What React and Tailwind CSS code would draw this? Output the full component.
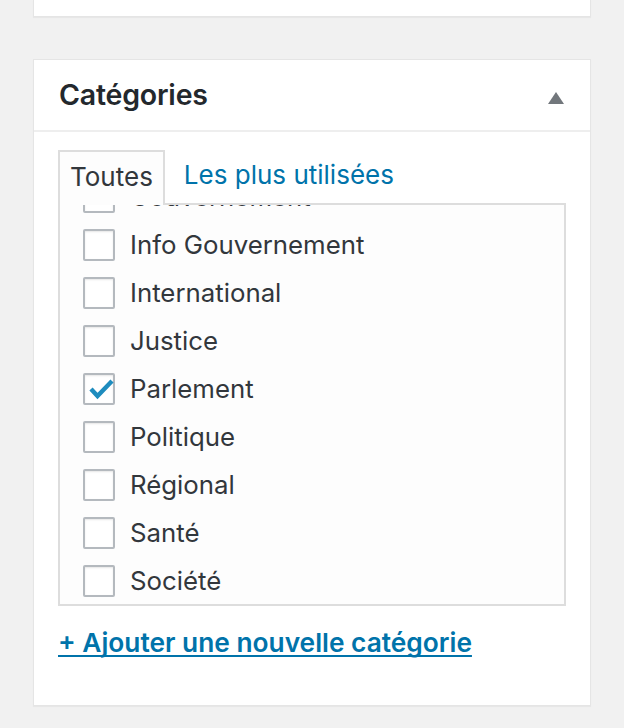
import React from "react";

const items = [
  { label: "Gouvernement", checked: false },
  { label: "Info Gouvernement", checked: false },
  { label: "International", checked: false },
  { label: "Justice", checked: false },
  { label: "Parlement", checked: true },
  { label: "Politique", checked: false },
  { label: "Régional", checked: false },
  { label: "Santé", checked: false },
  { label: "Société", checked: false },
];

function Box({ checked }) {
  return (
    <span className="relative flex h-[32px] w-[32px] shrink-0 items-center justify-center rounded-[2px] border-2 border-[#b4b9be] bg-white shadow-[inset_0_1px_2px_rgba(0,0,0,0.1)]">
      {checked && (
        <svg width="26" height="22" viewBox="0 0 26 22" className="absolute left-[4px] top-[3px]">
          <polyline points="2,11 8.5,18 23,3" fill="none" stroke="#1e8cbe" strokeWidth="4.4" strokeLinecap="butt" strokeLinejoin="miter" />
        </svg>
      )}
    </span>
  );
}

export default function App() {
  return (
    <div
      className="w-[624px] min-h-[728px] bg-[#f1f1f1] px-[33px]"
      style={{ fontFamily: "Inter, 'Noto Sans', sans-serif" }}
    >
      <div className="h-[17px] border-x border-b border-[#e5e5e5] bg-white shadow-[0_1px_1px_rgba(0,0,0,0.04)]" />
      <div className="mt-[42px] h-[647px] border border-[#e5e5e5] bg-white shadow-[0_1px_1px_rgba(0,0,0,0.04)]">
        <div className="flex h-[72px] items-center justify-between border-b-2 border-[#eeeeee] pl-[25px] pr-[26px]">
          <h2 className="text-[28.5px] font-semibold leading-none tracking-[-0.2px] text-[#23282d]">Catégories</h2>
          <svg width="16" height="12" viewBox="0 0 16 12" className="mt-[6px]">
            <polygon points="8,0 16,12 0,12" fill="#72777c" />
          </svg>
        </div>
        <div className="px-[24px] pt-[18px]">
          <div className="flex items-end">
            <div className="relative z-10 -mb-[2px] flex h-[55px] items-start border-2 border-b-0 border-[#dddddd] bg-[#fdfdfd] px-[10px] pt-[10px] text-[26px] leading-[30px] text-[#32373c]">
              Toutes
            </div>
            <div className="flex h-[53px] items-start pl-[19px] pt-[10px] text-[26px] leading-[30px] text-[#0073aa]">
              Les plus utilisées
            </div>
          </div>
          <div className="h-[403px] overflow-hidden border-2 border-[#dddddd] bg-[#fdfdfd]">
            <div className="-mt-[32px] flex flex-col pl-[23px]">
              {items.map((it) => (
                <div key={it.label} className="flex h-[48px] items-center gap-[15px] text-[25.8px] text-[#32373c]">
                  <Box checked={it.checked} />
                  <span className="leading-none">{it.label}</span>
                </div>
              ))}
            </div>
          </div>
          <div className="mt-[22px] leading-[30px]">
            <a href="#" className="text-[26.3px] font-semibold text-[#0073aa] underline decoration-2 underline-offset-[3px] [text-decoration-skip-ink:none]">
              + Ajouter une nouvelle catégorie
            </a>
          </div>
        </div>
      </div>
    </div>
  );
}
